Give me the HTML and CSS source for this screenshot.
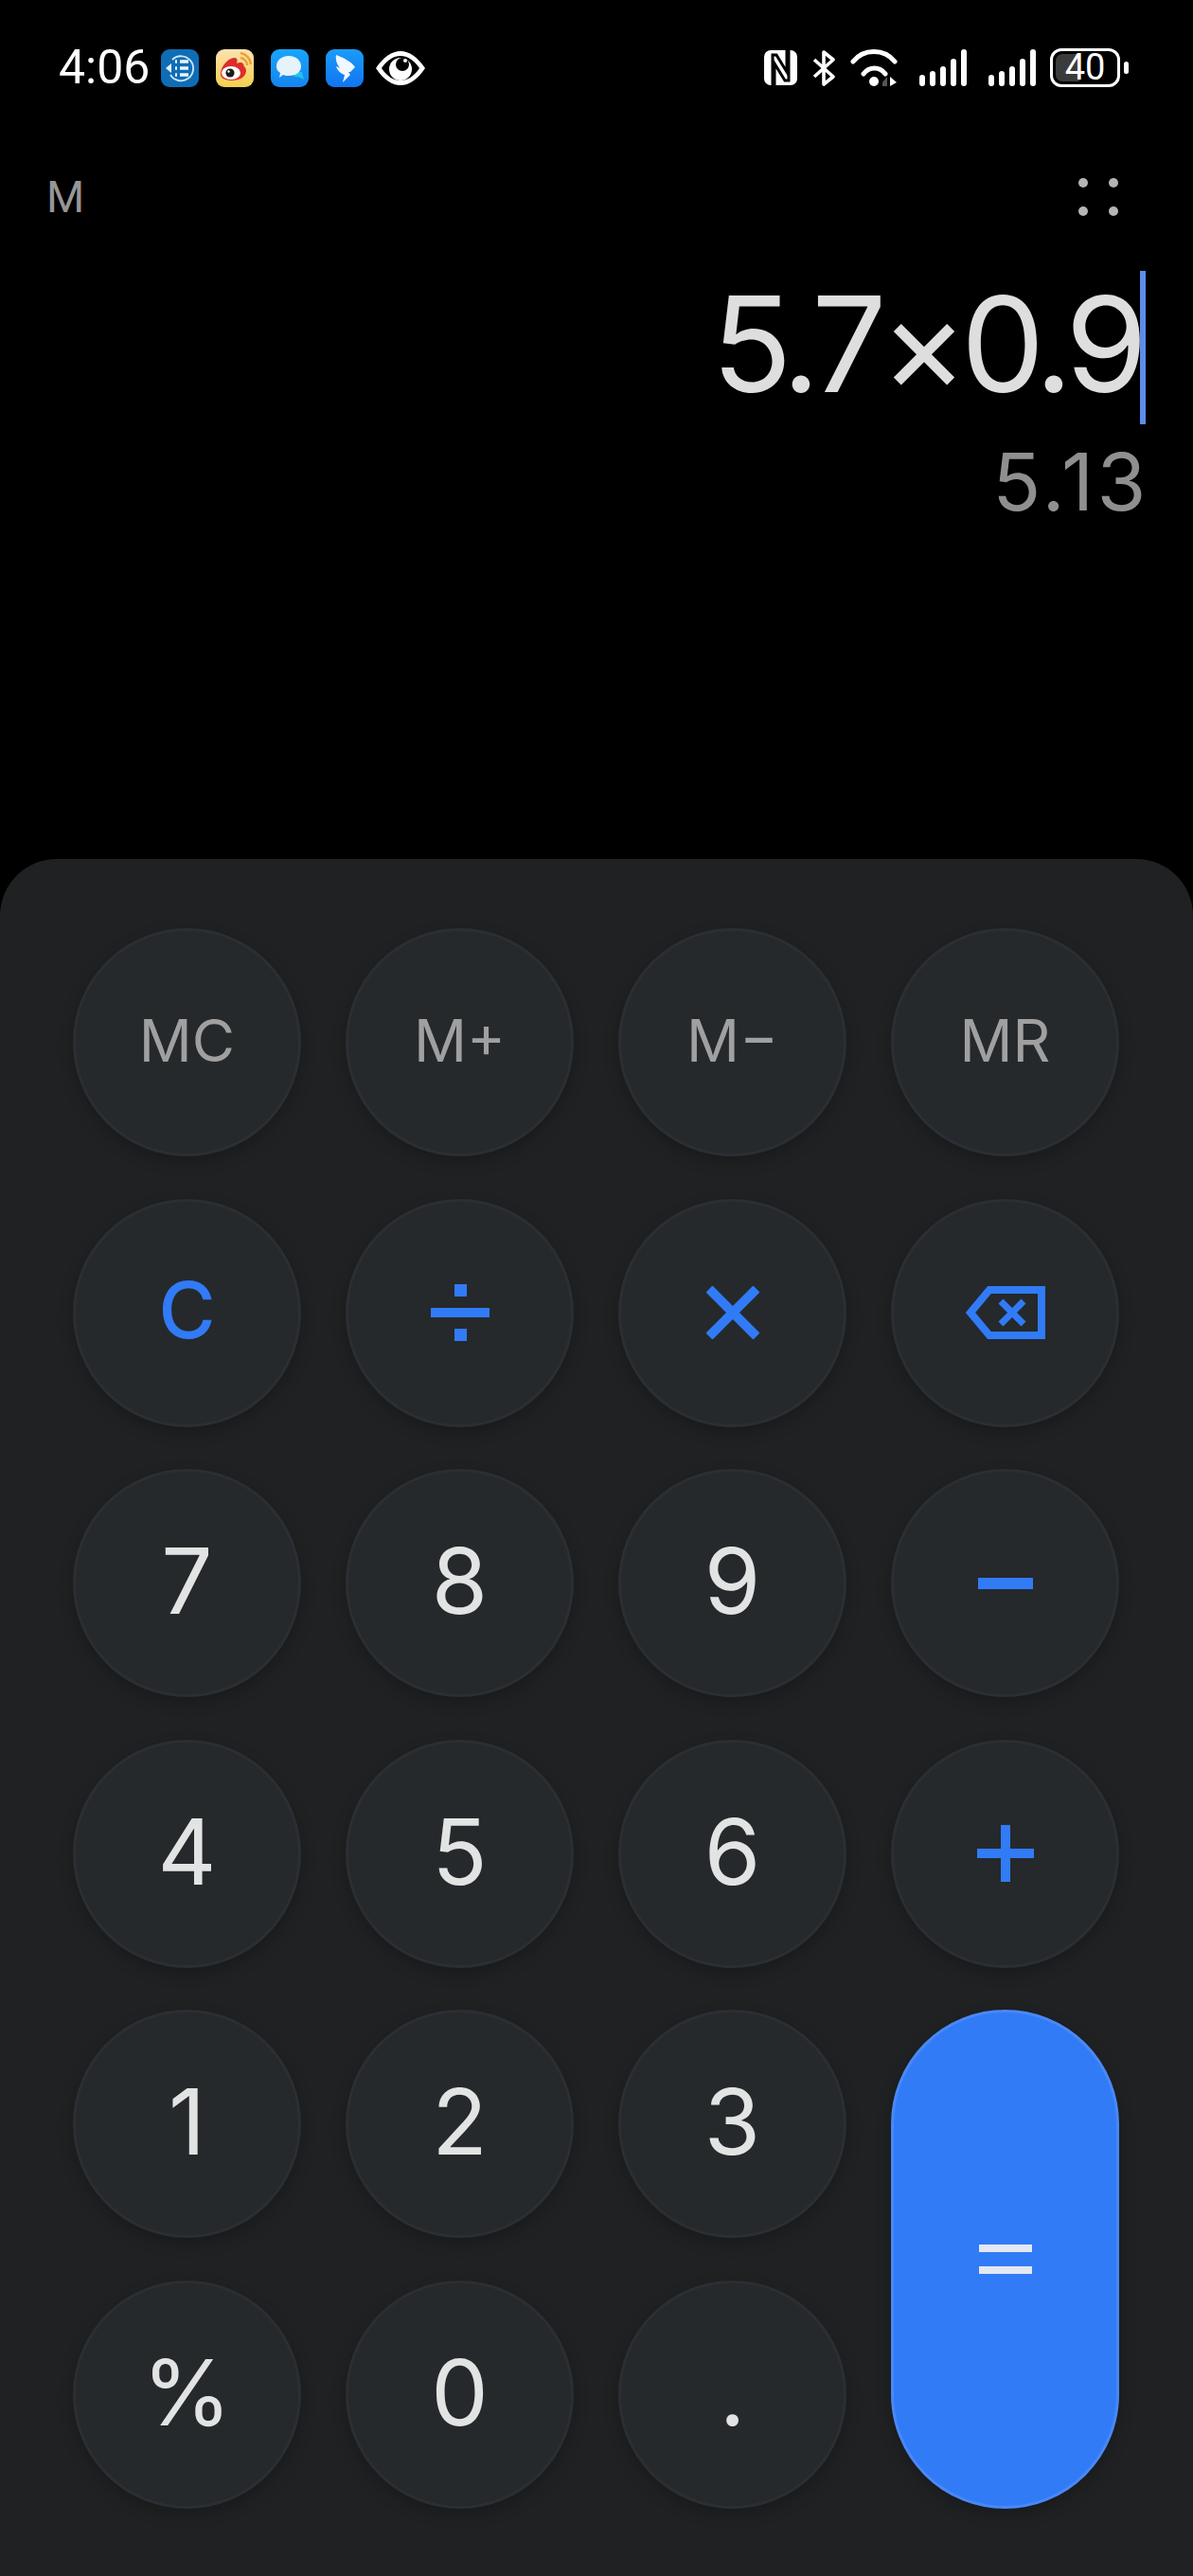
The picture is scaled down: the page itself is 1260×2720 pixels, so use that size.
FILE: index.html
```html
<!DOCTYPE html>
<html lang="en">

<head>
  <meta charset="UTF-8">
  <meta name="viewport" content="width=device-width, initial-scale=1.0">
  <title>Calculator</title>
  <link rel="stylesheet" href="styles.css">
</head>

<body>
  <div class="screen">

    <!-- Status bar -->
    <div class="status-bar">
      <div class="status-left">
        <span class="time">4:06</span>
        <svg class="app-icon first-icon" viewBox="0 0 40 40">
          <rect width="40" height="40" rx="9" fill="#0f6db5"/>
          <path d="M12 11 A13 13 0 1 1 10 27" fill="none" stroke="#cfe6f7" stroke-width="1.8"/>
          <path d="M5 20 L11 15 L11 25 Z" fill="#e8f4fc"/>
          <path d="M15 13 H17 M15 20 H17 M15 27 H17 M20 13 H29 M20 20 H29 M20 27 H29" stroke="#e8f4fc" stroke-width="3.4"/>
        </svg>
        <svg class="app-icon" viewBox="0 0 40 40">
          <defs>
            <linearGradient id="weibo-bg" x1="0" y1="0" x2="0" y2="1">
              <stop offset="0" stop-color="#fbe3b0"/>
              <stop offset="1" stop-color="#f6cf4f"/>
            </linearGradient>
          </defs>
          <rect width="40" height="40" rx="9" fill="url(#weibo-bg)"/>
          <path d="M5 26 C5 19 12 10 19 9 C23 8.500 23 12 22 15 C26 13 30 14 29.500 18 C33 20 33 26 28 30 C22 34 5 35 5 26 Z" fill="#de2c2b"/>
          <ellipse cx="16" cy="25" rx="10" ry="7" fill="#fff"/>
          <circle cx="15" cy="25" r="4.600" fill="#1c1c1c"/>
          <circle cx="13.500" cy="23.500" r="1.200" fill="#fff"/>
          <path d="M26 9 A8 8 0 0 1 33 17 M26 4 A13 13 0 0 1 37 16" fill="none" stroke="#eba033" stroke-width="2.400"/>
        </svg>
        <svg class="app-icon" viewBox="0 0 40 40">
          <defs>
            <linearGradient id="msg-bg" x1="0" y1="0" x2="0" y2="1">
              <stop offset="0" stop-color="#19a5fb"/>
              <stop offset="1" stop-color="#1584ee"/>
            </linearGradient>
          </defs>
          <rect width="40" height="40" rx="9" fill="url(#msg-bg)"/>
          <path d="M24 24 H33 L35 32 L29 29 C26 30 23 28 24 24 Z" fill="#1fc4e8"/>
          <path d="M19 7 C27 7 32 12 32 18 C32 24 27 28 19 28 C17 28 15 28 13 27 L9 30 L10 25 C7 23 6 21 6 18 C6 12 11 7 19 7 Z" fill="#e6f3fb"/>
        </svg>
        <svg class="app-icon" viewBox="0 0 40 40">
          <defs>
            <linearGradient id="ding-bg" x1="0" y1="0" x2="0" y2="1">
              <stop offset="0" stop-color="#1a9cfb"/>
              <stop offset="1" stop-color="#1274f0"/>
            </linearGradient>
          </defs>
          <rect width="40" height="40" rx="9" fill="url(#ding-bg)"/>
          <path d="M11 6 C19 9 27 13 31 19 L26 24 L24 24 L26 27 L18 35 L20 27 C16 26 12 22 11 18 L15 20 C12 16 10 11 11 6 Z" fill="#f2f8ff"/>
        </svg>
        <svg class="eye-icon" viewBox="0 0 52 36">
          <path fill-rule="evenodd" fill="#fff" d="M0 18 C8 6 17 0 26 0 S44 6 52 18 C44 30 35 36 26 36 S8 30 0 18 Z M6 18 C12 27 19 31 26 31 S40 27 46 18 C40 9 33 5 26 5 S12 9 6 18 Z"/>
          <circle cx="26" cy="19" r="12" fill="#fff"/>
          <circle cx="28" cy="14" r="7" fill="#000"/>
          <circle cx="31" cy="10" r="2" fill="#fff"/>
        </svg>
      </div>
      <div class="status-right">
        <svg class="nfc-icon" viewBox="0 0 35 37">
          <rect width="35" height="37" rx="7" fill="#fff"/>
          <path d="M9 37 V5 H13 L24 23 V0" fill="none" stroke="#000" stroke-width="3"/>
          <path d="M26 0 V32 H22 L11 14 V37" fill="none" stroke="#000" stroke-width="3"/>
        </svg>
        <svg class="bt-icon" viewBox="0 0 24 38">
          <path d="M2 10 L22 28 L12 36 V2 L22 10 L2 28" fill="none" stroke="#fff" stroke-width="3.600" stroke-linejoin="round"/>
        </svg>
        <svg class="wifi-icon" viewBox="0 0 50 39">
          <path d="M3 13 C14 -1 36 -1 47 13 M14 26 C20 18 31 18 37 26" fill="none" stroke="#fff" stroke-width="5" stroke-linecap="round"/>
          <circle cx="25" cy="34" r="5" fill="#fff"/>
          <path d="M34 35 L39 29 V39 H34 Z" fill="#555"/>
          <path d="M42 29 L49 35 L42 39 Z" fill="#fff"/>
        </svg>
        <svg class="signal-icon" viewBox="0 0 50 39">
          <rect x="0" y="27" width="6" height="12" rx="3" fill="#fff"/>
          <rect x="11" y="23" width="6" height="16" rx="3" fill="#fff"/>
          <rect x="22" y="18" width="6" height="21" rx="3" fill="#fff"/>
          <rect x="33" y="10" width="6" height="29" rx="3" fill="#fff"/>
          <rect x="44" y="0" width="6" height="39" rx="3" fill="#fff"/>
        </svg>
        <svg class="signal-icon" viewBox="0 0 50 39">
          <rect x="0" y="27" width="6" height="12" rx="3" fill="#fff"/>
          <rect x="11" y="23" width="6" height="16" rx="3" fill="#fff"/>
          <rect x="22" y="18" width="6" height="21" rx="3" fill="#fff"/>
          <rect x="33" y="10" width="6" height="29" rx="3" fill="#fff"/>
          <rect x="44" y="0" width="6" height="39" rx="3" fill="#fff"/>
        </svg>
        <div class="battery">
          <div class="battery-level">40</div>
        </div>
        <div class="battery-nub"></div>
      </div>
    </div>

    <!-- Memory indicator and menu -->
    <div class="top-row">
      <span class="memory-flag">M</span>
      <svg class="menu-icon" viewBox="0 0 42 40">
        <circle cx="5" cy="5" r="5" fill="#b5b5b5"/>
        <circle cx="37" cy="5" r="5" fill="#b5b5b5"/>
        <circle cx="5" cy="35" r="5" fill="#b5b5b5"/>
        <circle cx="37" cy="35" r="5" fill="#b5b5b5"/>
      </svg>
    </div>

    <!-- Display -->
    <div class="display">
      <div class="expression">5.7×0.9<span class="caret"></span></div>
      <div class="result">5.13</div>
    </div>

    <!-- Keypad -->
    <div class="panel">
      <div class="keypad">
        <button class="key key-memory">MC</button>
        <button class="key key-memory">M+</button>
        <button class="key key-memory">M−</button>
        <button class="key key-memory">MR</button>

        <button class="key key-clear">C</button>
        <button class="key key-icon">
          <svg width="62" height="60" viewBox="0 0 62 60">
            <rect x="25" y="0" width="13" height="13" fill="#317bf7"/>
            <rect x="0" y="25" width="62" height="10" fill="#317bf7"/>
            <rect x="25" y="47" width="13" height="13" fill="#317bf7"/>
          </svg>
        </button>
        <button class="key key-icon">
          <svg width="56" height="56" viewBox="0 0 56 56">
            <path d="M3 3 L53 53 M53 3 L3 53" stroke="#317bf7" stroke-width="10"/>
          </svg>
        </button>
        <button class="key key-icon">
          <svg width="84" height="56" viewBox="0 0 84 56">
            <path d="M80 4 H25 L5 28 L25 52 H80 Z" fill="none" stroke="#317bf7" stroke-width="8"/>
            <path d="M37 16 L61 40 M61 16 L37 40" stroke="#317bf7" stroke-width="7"/>
          </svg>
        </button>

        <button class="key">7</button>
        <button class="key">8</button>
        <button class="key">9</button>
        <button class="key key-icon">
          <svg width="58" height="12" viewBox="0 0 58 12">
            <rect width="58" height="12" fill="#317bf7"/>
          </svg>
        </button>

        <button class="key">4</button>
        <button class="key">5</button>
        <button class="key">6</button>
        <button class="key key-icon">
          <svg width="60" height="60" viewBox="0 0 60 60">
            <path d="M0 30 H60 M30 0 V60" stroke="#317bf7" stroke-width="10"/>
          </svg>
        </button>

        <button class="key">1</button>
        <button class="key">2</button>
        <button class="key">3</button>
        <button class="key key-icon key-equals">
          <svg width="56" height="31" viewBox="0 0 56 31">
            <rect width="56" height="8" fill="#e3e8f2"/>
            <rect y="23" width="56" height="8" fill="#e3e8f2"/>
          </svg>
        </button>

        <button class="key">%</button>
        <button class="key">0</button>
        <button class="key">.</button>
      </div>
    </div>

  </div>
</body>

</html>
```

FILE: styles.css
```css
/* Reset styles */
* {
  margin: 0;
  padding: 0;
  box-sizing: border-box;
}

body {
  background: #000;
  font-family: Inter, "Noto Sans", sans-serif;
}

.screen {
  display: flex;
  flex-direction: column;
  height: 2720px;
  overflow: hidden;
}

/* Status bar */
.status-bar {
  display: flex;
  justify-content: space-between;
  align-items: center;
  height: 41px;
  margin-top: 51px;
  padding: 0 68px 0 62px;
  color: #fff;
}

.status-left,
.status-right {
  display: flex;
  align-items: center;
}

.time {
  width: 108px;
  font-family: Roboto, sans-serif;
  font-size: 50px;
  line-height: 41px;
}

.app-icon {
  width: 40px;
  height: 40px;
  margin-right: 18px;
}

.eye-icon {
  width: 52px;
  height: 36px;
  margin-left: -5px;
}

.nfc-icon {
  width: 35px;
  height: 37px;
  margin-right: 16px;
}

.bt-icon {
  width: 24px;
  height: 38px;
  margin-right: 16px;
}

.wifi-icon {
  width: 50px;
  height: 39px;
}

.signal-icon {
  width: 50px;
  height: 39px;
  margin-left: 23px;
}

.battery {
  width: 74px;
  height: 41px;
  margin-left: 15px;
  padding: 3px;
  border: 3px solid #fff;
  border-radius: 12px;
}

.battery-level {
  height: 100%;
  border-radius: 7px 0 0 7px;
  background: linear-gradient(to right, #3b3b3b 40%, transparent 40%);
  font-family: Roboto, sans-serif;
  font-size: 38px;
  line-height: 29px;
  text-align: center;
}

.battery-nub {
  width: 5px;
  height: 13px;
  margin-left: 4px;
  border-radius: 3px;
  background: #fff;
}

/* Memory flag and menu */
.top-row {
  display: flex;
  justify-content: space-between;
  align-items: flex-start;
  margin-top: 96px;
  padding: 0 79px 0 49px;
}

.memory-flag {
  font-family: Roboto, sans-serif;
  font-size: 46px;
  line-height: 41px;
  color: #969696;
}

.menu-icon {
  width: 42px;
  height: 40px;
}

/* Display */
.display {
  flex: 1;
  padding-right: 50px;
  text-align: right;
}

.expression {
  display: flex;
  justify-content: flex-end;
  align-items: flex-start;
  margin-top: 57px;
  font-size: 140px;
  font-weight: 375;
  line-height: 154px;
  letter-spacing: -7px;
  color: #dedede;
}

.caret {
  width: 6px;
  height: 162px;
  margin-left: -1px;
  background: #5b8def;
}

.result {
  margin: 16px -4px 0 0;
  font-size: 84px;
  font-weight: 375;
  line-height: 90px;
  letter-spacing: 3.500px;
  color: #8f8f8f;
}

/* Keypad */
.panel {
  height: 1813px;
  padding: 73px 76px 0 77px;
  border-radius: 60px 60px 0 0;
  background: #1f2123;
}

.keypad {
  display: grid;
  grid-template-columns: repeat(4, 241px);
  grid-auto-rows: 241px;
  column-gap: 47px;
  row-gap: 44.600px;
}

.key {
  display: flex;
  justify-content: center;
  align-items: center;
  padding-bottom: 5px;
  border: 3px solid #2b2e32;
  border-radius: 50%;
  background: #25292c;
  box-shadow: 0 6px 16px rgba(0, 0, 0, 0.22);
  font-family: inherit;
  font-size: 96px;
  font-weight: 375;
  color: #e2e4e3;
}

.key-memory {
  font-size: 62px;
  color: #a0a0a0;
}

.key-clear {
  font-size: 82px;
  font-weight: 450;
  color: #317bf7;
}

.key-icon {
  padding-bottom: 0;
}

.key-equals {
  grid-column: 4;
  grid-row: 5 / span 2;
  border-color: #4a88f5;
  border-radius: 121px;
  background: #317bf7;
}
```
